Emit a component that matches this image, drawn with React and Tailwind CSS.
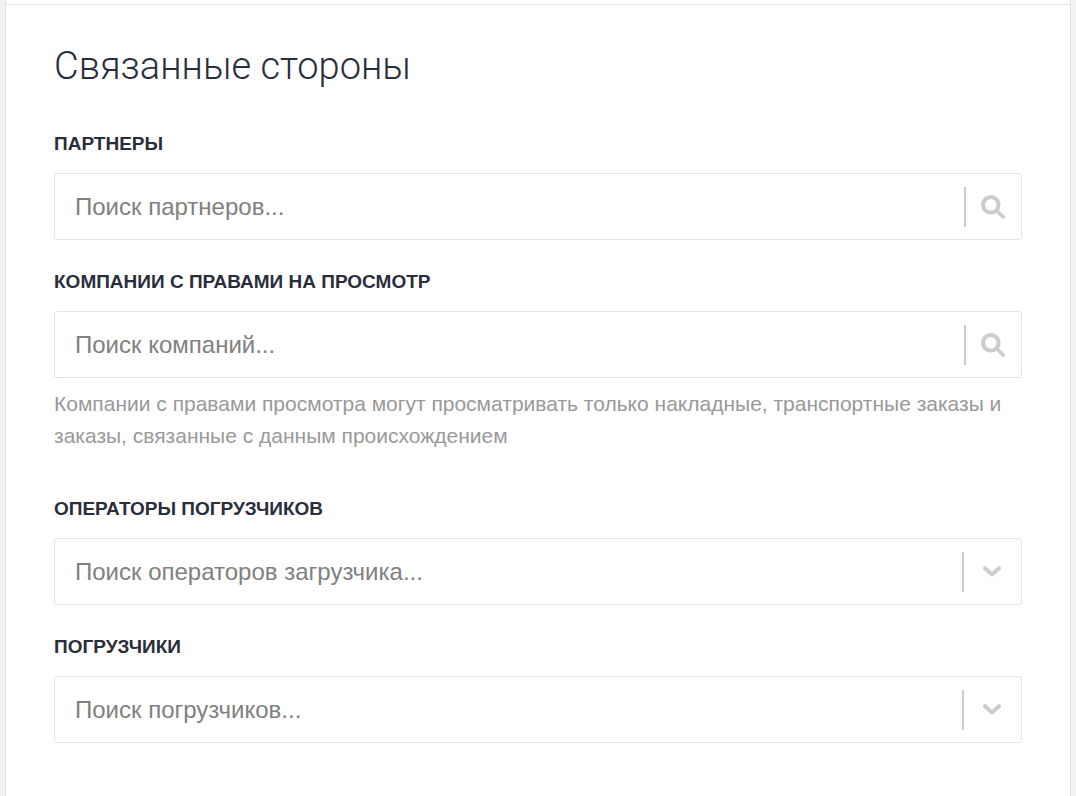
function SearchIcon() {
  return (
    <svg viewBox="0 0 24 24" className="size-6 fill-none stroke-[#cccccc]" aria-hidden="true">
      <circle cx="9.8" cy="9.8" r="7.8" strokeWidth="4" />
      <path d="M15.5 15.5L22.2 22" strokeWidth="3.6" strokeLinecap="round" />
    </svg>
  );
}

function ChevronIcon() {
  return (
    <svg
      viewBox="0 0 32 32"
      className="size-8 fill-none stroke-[#cccccc]"
      strokeWidth="4"
      strokeLinecap="round"
      strokeLinejoin="round"
      aria-hidden="true"
    >
      <path d="M9 12.2L16 18.4L23 12.2" />
    </svg>
  );
}

function Field({ id, label, hint, children }) {
  return (
    <div className="flex flex-col">
      <label htmlFor={id} className="mb-[15px] text-[19px] leading-7 font-bold text-[#2a2e3b] uppercase">
        {label}
      </label>
      {children}
      {hint && (
        <p id={`${id}-hint`} className="mt-2.5 mb-[15px] text-[21px] leading-8 text-[#999999]">
          {hint}
        </p>
      )}
    </div>
  );
}

function SearchField({ id, label, placeholder, hint }) {
  return (
    <Field id={id} label={label} hint={hint}>
      <div className="flex h-[67px] items-center rounded-[3px] border border-[#e3e4e6] bg-white pr-4">
        <input
          id={id}
          type="text"
          placeholder={placeholder}
          aria-describedby={hint ? `${id}-hint` : undefined}
          className="h-full min-w-0 flex-1 bg-transparent pl-5 text-[24px] text-[#333333] outline-none placeholder:text-[#808080]"
        />
        <span className="mr-[15px] h-10 w-0.5 bg-[#cccccc]" />
        <SearchIcon />
      </div>
    </Field>
  );
}

function SelectField({ id, label, placeholder }) {
  return (
    <Field id={id} label={label}>
      <div className="flex h-[67px] items-center rounded-[3px] border border-[#e3e4e6] bg-white pr-[13px]">
        <select
          id={id}
          defaultValue=""
          className="h-full min-w-0 flex-1 appearance-none bg-transparent pl-5 text-[24px] text-[#808080] outline-none"
        >
          <option value="">{placeholder}</option>
        </select>
        <span className="mr-3 h-10 w-0.5 bg-[#cccccc]" />
        <ChevronIcon />
      </div>
    </Field>
  );
}

export default function App() {
  return (
    <div className="flex min-h-screen bg-[#f2f2f2] px-[5px] font-['Liberation_Sans',Arial,sans-serif]">
      <main className="flex-1 border-x border-[#dfe3e8] bg-white pt-1">
        <section className="border-t border-[#dfe3e8] px-12 pt-[37px] pb-12">
          <h2 className="mb-10 font-['Roboto',sans-serif] text-[38px] leading-[48px] font-light text-[#2a2e3b]">
            Связанные стороны
          </h2>
          <form className="flex flex-col gap-7">
            <SearchField id="partners" label="Партнеры" placeholder="Поиск партнеров..." />
            <SearchField
              id="viewers"
              label="Компании с правами на просмотр"
              placeholder="Поиск компаний..."
              hint="Компании с правами просмотра могут просматривать только накладные, транспортные заказы и заказы, связанные с данным происхождением"
            />
            <SelectField id="operators" label="Операторы погрузчиков" placeholder="Поиск операторов загрузчика..." />
            <SelectField id="loaders" label="Погрузчики" placeholder="Поиск погрузчиков..." />
          </form>
        </section>
      </main>
    </div>
  );
}
